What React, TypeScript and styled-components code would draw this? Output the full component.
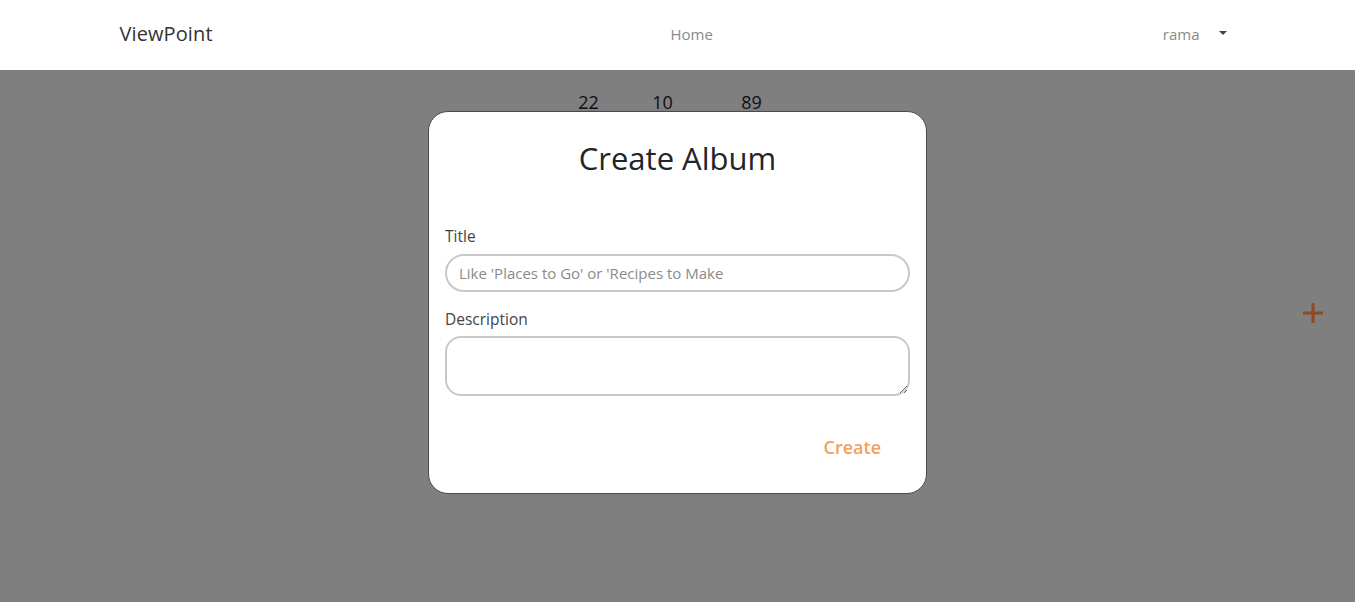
import React from "react";
import styled, { createGlobalStyle } from "styled-components";

const GlobalStyle = createGlobalStyle`
  * { box-sizing: border-box; }
  html, body { margin: 0; padding: 0; }
  body {
    font-family: "Open Sans", "Liberation Sans", sans-serif;
    background: #ffffff;
    color: #212529;
    height: 602px;
    overflow: hidden;
  }
`;

const NavBar = styled.header`
  position: relative;
  z-index: 20;
  height: 70px;
  background: #ffffff;
`;

const NavContainer = styled.div`
  max-width: 1140px;
  height: 100%;
  margin: 0 auto;
  padding: 0 12px 3px;
  display: flex;
  align-items: center;
  justify-content: space-between;
`;

const Brand = styled.a`
  font-size: 20px;
  color: #333333;
  text-decoration: none;
  letter-spacing: 0.1px;
`;

const NavLink = styled.a`
  font-size: 15px;
  color: #8a8a8a;
  text-decoration: none;
  padding: 8px;
  margin-left: 16px;
`;

const UserToggle = styled.button`
  display: flex;
  align-items: center;
  border: none;
  background: transparent;
  font-family: inherit;
  font-size: 15px;
  color: #8a8a8a;
  padding: 8px 8px;
  cursor: pointer;
`;

const Caret = styled.span`
  display: inline-block;
  margin-left: 20px;
  width: 0;
  height: 0;
  border-left: 4px solid transparent;
  border-right: 4px solid transparent;
  border-top: 4px solid #444444;
  transform: translateY(-1px);
`;

const Main = styled.main`
  padding-top: 19px;
`;

const StatsRow = styled.div`
  display: flex;
  justify-content: center;
`;

const Stat = styled.div<{ $w: number }>`
  width: ${(p) => p.$w}px;
  text-align: center;
  font-size: 18px;
  line-height: 27px;
  color: #1d2030;
`;

const Fab = styled.button`
  position: fixed;
  right: 22px;
  top: 293px;
  z-index: 15;
  width: 40px;
  height: 40px;
  border: none;
  background: transparent;
  display: flex;
  align-items: center;
  justify-content: center;
  padding: 0;
`;

const Backdrop = styled.div`
  position: fixed;
  inset: 0;
  z-index: 10;
  background: rgba(0, 0, 0, 0.5);
  display: flex;
  justify-content: center;
  align-items: flex-start;
  padding-top: 111px;
`;

const Modal = styled.div`
  width: 499px;
  background: #ffffff;
  border: 1px solid #4a4a4a;
  border-radius: 20px;
  padding: 28px 16px 28px;
  display: flex;
  flex-direction: column;
`;

const ModalTitle = styled.h2`
  margin: 0 0 49px;
  font-size: 31px;
  line-height: 37px;
  font-weight: 400;
  text-align: center;
  color: #212529;
`;

const Field = styled.div<{ $gap?: number }>`
  display: flex;
  flex-direction: column;
  margin-top: ${(p) => p.$gap ?? 0}px;
`;

const Label = styled.label<{ $mb: number }>`
  font-size: 15.5px;
  line-height: 20px;
  color: #444444;
  margin-bottom: ${(p) => p.$mb}px;
`;

const TextInput = styled.input`
  height: 38px;
  border: 2px solid #c8c8c8;
  border-radius: 19px;
  padding: 0 12px;
  font-family: inherit;
  font-size: 15px;
  color: #333;
  outline: none;
  &::placeholder { color: #8a8a8a; }
`;

const TextArea = styled.textarea`
  height: 60px;
  border: 2px solid #c8c8c8;
  border-radius: 16px;
  padding: 8px 12px;
  font-family: inherit;
  font-size: 15px;
  outline: none;
  resize: vertical;
`;

const Footer = styled.div`
  display: flex;
  justify-content: flex-end;
  margin-top: 33px;
  padding-right: 17px;
`;

const CreateButton = styled.button`
  border: none;
  background: transparent;
  font-family: inherit;
  font-size: 18px;
  font-weight: 600;
  line-height: 24px;
  padding: 6px 12px;
  color: #f5a05a;
  cursor: pointer;
`;

export default function App() {
  return (
    <>
      <GlobalStyle />
      <NavBar>
        <NavContainer>
          <Brand href="#">ViewPoint</Brand>
          <NavLink href="#">Home</NavLink>
          <UserToggle>
            rama
            <Caret />
          </UserToggle>
        </NavContainer>
      </NavBar>
      <Main>
        <StatsRow>
          <Stat $w={74}>22</Stat>
          <Stat $w={74}>10</Stat>
          <Stat $w={104}>89</Stat>
        </StatsRow>
      </Main>
      <Backdrop>
        <Modal>
          <ModalTitle>Create Album</ModalTitle>
          <Field>
            <Label $mb={8}>Title</Label>
            <TextInput placeholder="Like 'Places to Go' or 'Recipes to Make" />
          </Field>
          <Field $gap={17}>
            <Label $mb={7}>Description</Label>
            <TextArea />
          </Field>
          <Footer>
            <CreateButton>Create</CreateButton>
          </Footer>
        </Modal>
      </Backdrop>
      <Fab aria-label="Add">
        <svg width="22" height="22" viewBox="0 0 22 22">
          <path d="M11 1v20M1 11h20" stroke="#8c4b24" strokeWidth="3" fill="none" />
        </svg>
      </Fab>
    </>
  );
}
